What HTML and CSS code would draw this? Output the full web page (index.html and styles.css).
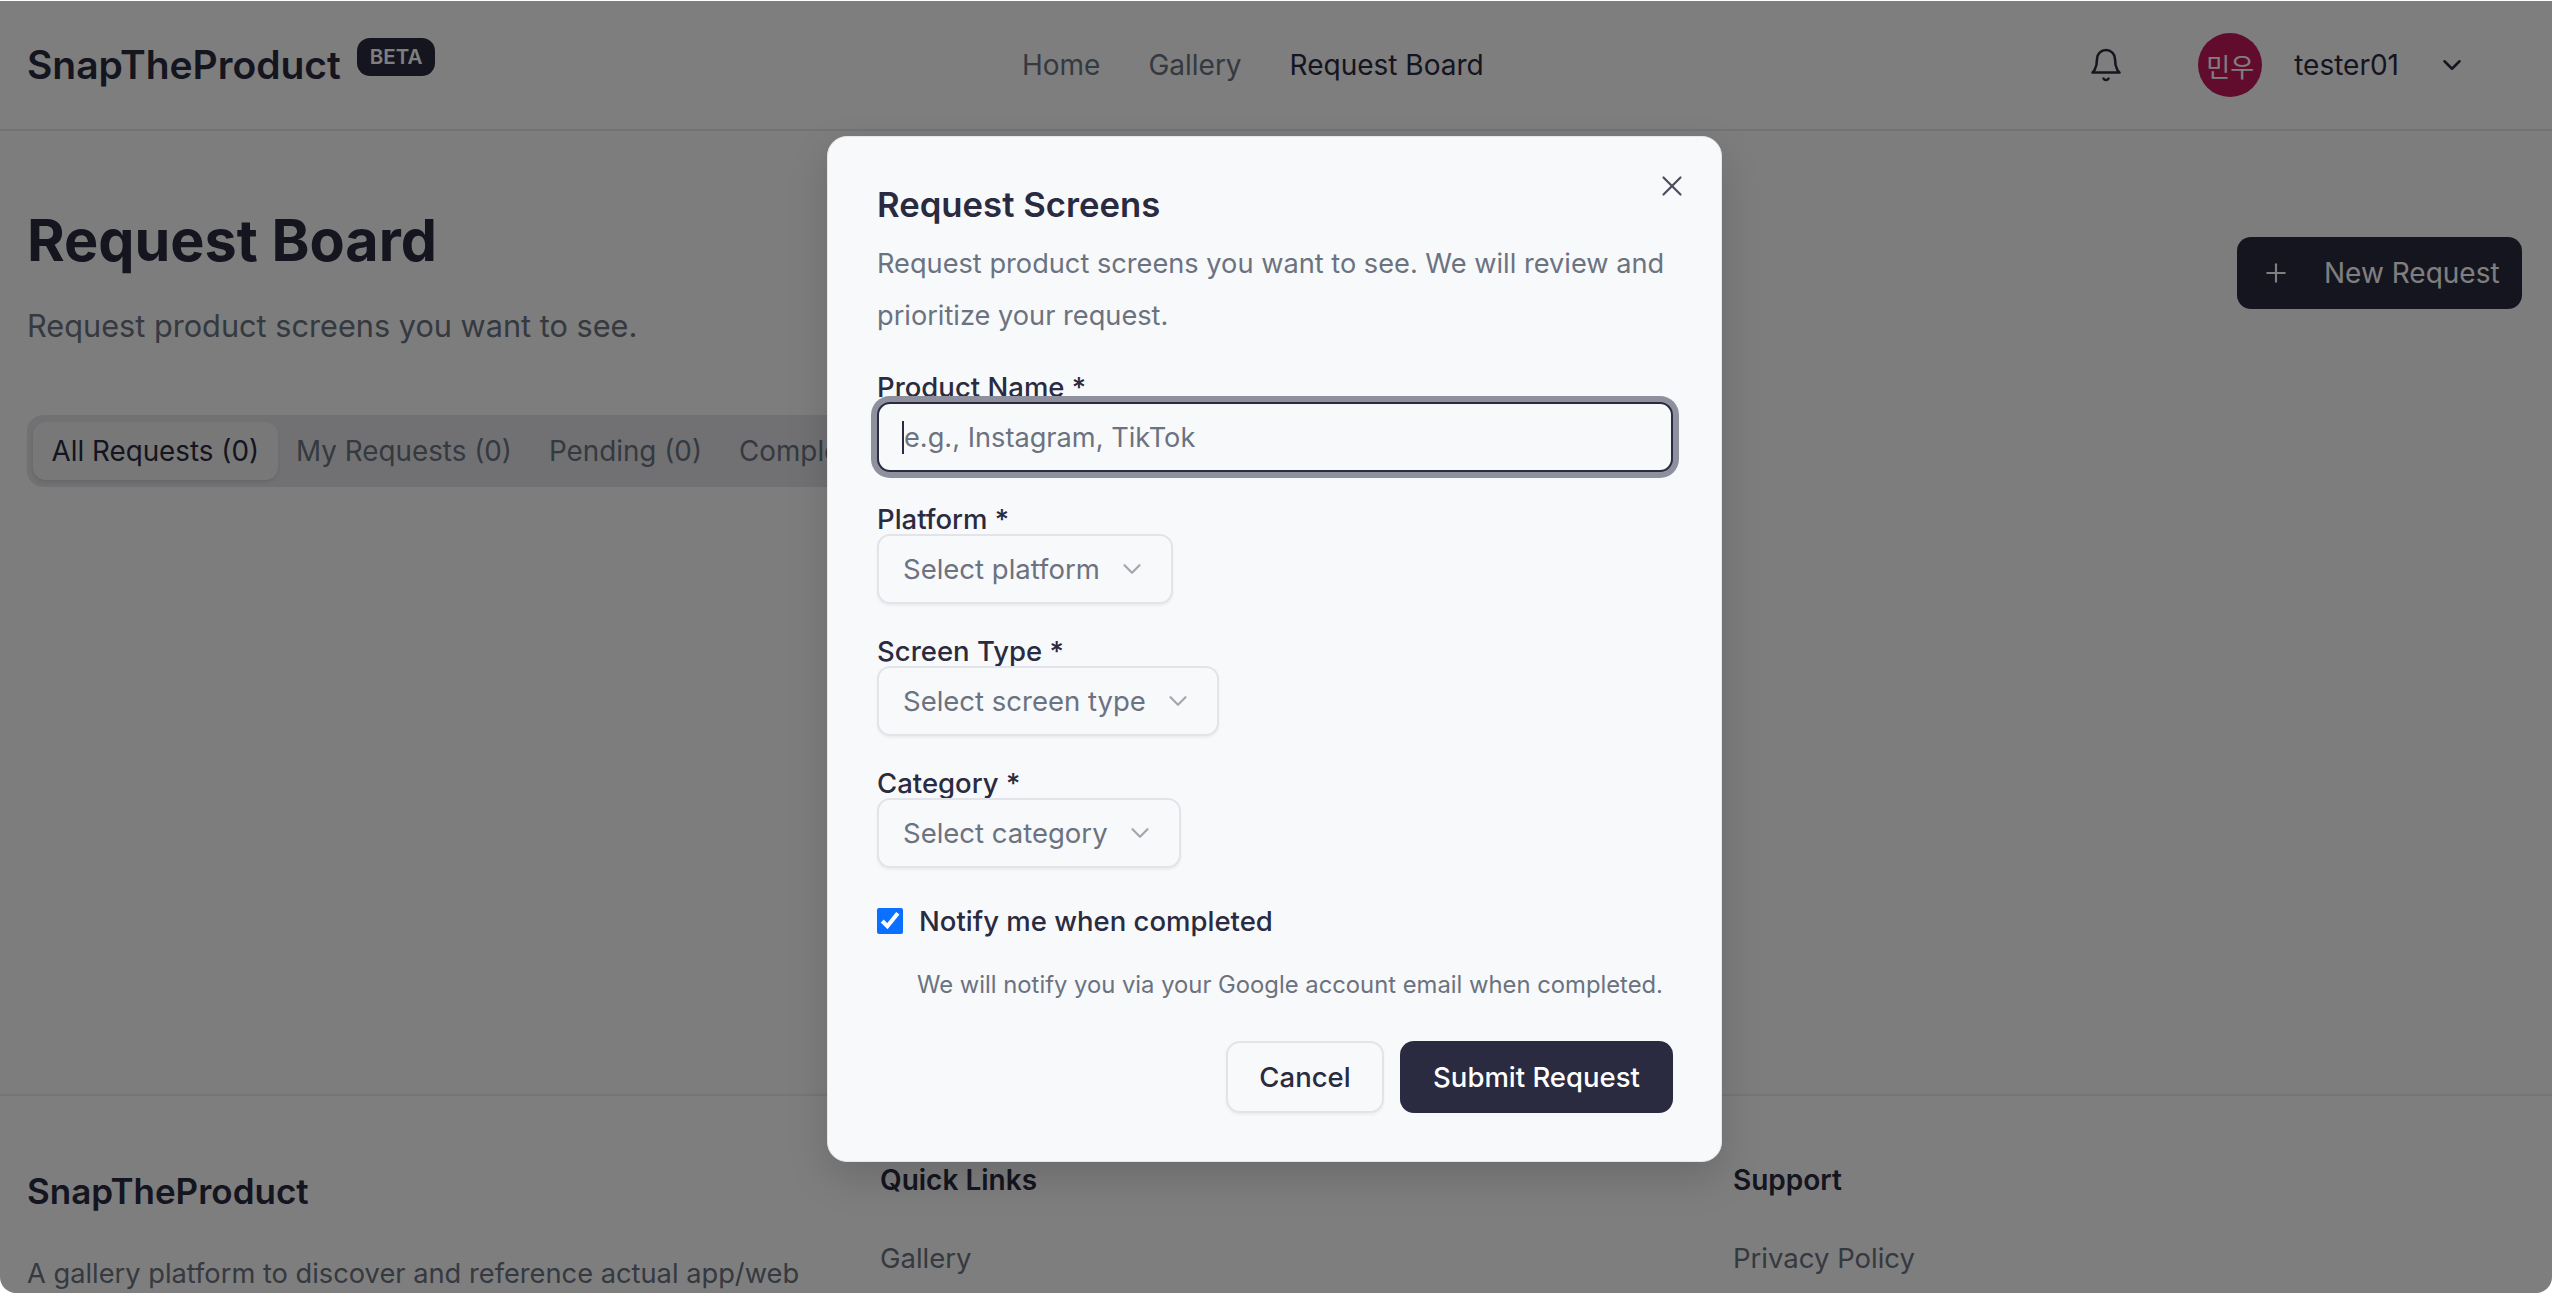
FILE: index.html
```html
<!DOCTYPE html>
<html lang="en">
<head>
  <meta charset="UTF-8">
  <meta name="viewport" content="width=device-width, initial-scale=1.0">
  <title>SnapTheProduct - Request Board</title>
  <link rel="stylesheet" href="styles.css">
</head>
<body>
  <div class="window">

    <!-- Header -->
    <header class="header">
      <div class="brand">
        <a class="logo">SnapTheProduct</a>
        <span class="beta">BETA</span>
      </div>
      <nav class="nav">
        <a>Home</a>
        <a>Gallery</a>
        <a class="active">Request Board</a>
      </nav>
      <div class="header-right">
        <button class="bell" aria-label="Notifications">
          <svg viewBox="0 0 24 24" class="icon-bell"><path d="M6 8a6 6 0 0 1 12 0c0 7 3 9 3 9H3s3-2 3-9"/><path d="M10.3 21a1.94 1.94 0 0 0 3.4 0"/></svg>
        </button>
        <div class="user">
          <span class="avatar">민우</span>
          <span class="username">tester01</span>
          <svg viewBox="0 0 24 24" class="icon-chevron"><path d="m6 9 6 6 6-6"/></svg>
        </div>
      </div>
    </header>

    <!-- Request board -->
    <main class="main">
      <div class="page-head">
        <div>
          <h1>Request Board</h1>
          <p class="subtitle">Request product screens you want to see.</p>
        </div>
        <button class="new-request">
          <svg viewBox="0 0 24 24" class="icon-plus"><path d="M5 12h14"/><path d="M12 5v14"/></svg>
          New Request
        </button>
      </div>
      <div class="tabs">
        <span class="tab active">All Requests (0)</span>
        <span class="tab">My Requests (0)</span>
        <span class="tab">Pending (0)</span>
        <span class="tab">Completed (0)</span>
      </div>
    </main>

    <!-- Footer -->
    <footer class="footer">
      <div>
        <h3 class="footer-logo">SnapTheProduct</h3>
        <p class="footer-text">A gallery platform to discover and reference actual app/web</p>
      </div>
      <div>
        <h4>Quick Links</h4>
        <a>Gallery</a>
      </div>
      <div>
        <h4>Support</h4>
        <a>Privacy Policy</a>
      </div>
    </footer>

    <!-- Modal -->
    <div class="overlay">
      <form class="modal">
        <button type="button" class="close" aria-label="Close">
          <svg viewBox="0 0 24 24"><path d="M18 6 6 18"/><path d="m6 6 12 12"/></svg>
        </button>
        <h2>Request Screens</h2>
        <p class="modal-desc">Request product screens you want to see. We will review and prioritize your request.</p>

        <label for="product">Product Name *</label>
        <div class="input-wrap">
          <input type="text" id="product" placeholder="e.g., Instagram, TikTok" autofocus>
        </div>

        <label>Platform *</label>
        <button type="button" class="select">Select platform
          <svg viewBox="0 0 24 24"><path d="m6 9 6 6 6-6"/></svg>
        </button>

        <label>Screen Type *</label>
        <button type="button" class="select">Select screen type
          <svg viewBox="0 0 24 24"><path d="m6 9 6 6 6-6"/></svg>
        </button>

        <label>Category *</label>
        <button type="button" class="select">Select category
          <svg viewBox="0 0 24 24"><path d="m6 9 6 6 6-6"/></svg>
        </button>

        <div class="notify">
          <input type="checkbox" id="notify" checked>
          <label for="notify">Notify me when completed</label>
        </div>
        <p class="hint">We will notify you via your Google account email when completed.</p>

        <div class="actions">
          <button type="button" class="btn-cancel">Cancel</button>
          <button type="submit" class="btn-submit">Submit Request</button>
        </div>
      </form>
    </div>
  </div>
</body>
</html>
```

FILE: styles.css
```css
* {
  box-sizing: border-box;
}

html, body {
  height: 100%;
}

body {
  margin: 0;
  background: #fff;
  font-family: Inter, "Noto Sans CJK KR", sans-serif;
  font-size: 28px;
  color: #2a2b40;
  overflow: hidden;
}

button {
  font-family: inherit;
  font-size: inherit;
  border: none;
  background: none;
  color: inherit;
  padding: 0;
}

svg {
  fill: none;
  stroke: currentColor;
  stroke-width: 2;
  stroke-linecap: round;
  stroke-linejoin: round;
}

.window {
  position: relative;
  height: 1292px;
  margin-top: 1px;
  background: #fcfcfc;
  border-radius: 0 0 16px 16px;
  overflow: hidden;
  display: flex;
  flex-direction: column;
}

/* Header */
.header {
  height: 130px;
  flex-shrink: 0;
  padding: 0 27px;
  display: flex;
  align-items: center;
  justify-content: space-between;
  border-bottom: 2px solid #e6e6e8;
}

.brand {
  display: flex;
  align-items: flex-start;
  gap: 16px;
}

.logo {
  font-size: 39px;
  font-weight: 600;
  line-height: 50px;
}

.beta {
  margin-top: -2px;
  height: 38px;
  line-height: 38px;
  padding: 0 13px;
  border-radius: 13px;
  background: #2a2b40;
  color: #fff;
  font-size: 20.5px;
  font-weight: 600;
}

.nav {
  display: flex;
  gap: 48px;
  color: #6b7280;
}

.nav .active {
  color: #2a2b40;
}

.header-right {
  display: flex;
  align-items: center;
  gap: 56px;
}

.bell {
  width: 72px;
  height: 72px;
  display: flex;
  align-items: center;
  justify-content: center;
}

.icon-bell {
  width: 36px;
  height: 36px;
  stroke-width: 1.7;
}

.user {
  display: flex;
  align-items: center;
  gap: 32px;
}

.avatar {
  width: 64px;
  height: 64px;
  border-radius: 50%;
  background: #c2185b;
  color: #fff;
  font-size: 26px;
  display: flex;
  align-items: center;
  justify-content: center;
}

.icon-chevron {
  width: 30px;
  height: 30px;
  margin-left: 6px;
  margin-right: 58px;
}

/* Request board */
.main {
  flex: 1;
  padding: 73px 27px 0;
  background: #fafbfa;
  overflow: hidden;
}

.page-head {
  display: flex;
  justify-content: space-between;
  align-items: center;
}

h1 {
  margin: 0;
  font-size: 57.5px;
  line-height: 72px;
  font-weight: 700;
}

.subtitle {
  margin: 28px 0 0;
  font-size: 30.7px;
  line-height: 44px;
  color: #6b7280;
}

.new-request {
  width: 285px;
  height: 72px;
  margin: 0 3px 7px 0;
  padding: 0 24px;
  border-radius: 14px;
  background: #2a2b40;
  color: #fff;
  display: flex;
  align-items: center;
  gap: 33px;
  white-space: nowrap;
}

.icon-plus {
  width: 30px;
  height: 30px;
  flex-shrink: 0;
  stroke-width: 1.7;
}

.tabs {
  display: inline-flex;
  align-items: center;
  height: 72px;
  margin-top: 67px;
  padding: 0 6px;
  border-radius: 16px;
  background: #e2e3e6;
  color: #6b7280;
  font-size: 27.8px;
}

.tab {
  height: 58px;
  line-height: 58px;
  padding: 0 18.5px;
  white-space: nowrap;
}

.tab.active {
  border-radius: 13px;
  background: #f0f1f3;
  color: #2a2b40;
  box-shadow: 0 2px 4px rgba(0, 0, 0, 0.1);
}

/* Footer */
.footer {
  height: 199px;
  flex-shrink: 0;
  padding: 70px 20px 0 27px;
  display: grid;
  grid-template-columns: repeat(3, 1fr);
  gap: 54px;
  border-top: 2px solid #ebebec;
  overflow: hidden;
}

.footer-logo {
  margin: 0;
  font-size: 35px;
  font-weight: 600;
  line-height: 50px;
}

.footer-text {
  margin: 37px 0 0;
  color: #6b7280;
  font-size: 27.25px;
  line-height: 42px;
  white-space: nowrap;
}

.footer h4 {
  margin: -2px 0 0;
  font-size: 28px;
  font-weight: 600;
  line-height: 32px;
}

.footer a {
  display: block;
  margin-top: 45px;
  color: #6b7280;
  font-size: 27.5px;
}

/* Modal */
.overlay {
  position: absolute;
  inset: 0;
  padding: 4px 3px 0 0;
  background: rgba(0, 0, 0, 0.5);
  display: flex;
  align-items: center;
  justify-content: center;
}

.modal {
  position: relative;
  width: 895px;
  height: 1026px;
  padding: 47px 48px 0 49px;
  border-radius: 20px;
  background: #f8f9fb;
  border: 1px solid #e5e6ea;
  box-shadow: 0 16px 40px rgba(0, 0, 0, 0.15);
  font-size: 27.5px;
}

.close {
  position: absolute;
  top: 32px;
  right: 32px;
  width: 34px;
  height: 34px;
  color: #4a4b5c;
}

.close svg {
  width: 34px;
  height: 34px;
  stroke-width: 1.5;
}

h2 {
  margin: 0;
  font-size: 34.7px;
  line-height: 40px;
  font-weight: 600;
}

.modal-desc {
  margin: 14px 0 0;
  font-size: 27.2px;
  line-height: 52px;
  color: #6b7280;
}

.modal > label {
  display: block;
  height: 26px;
  line-height: 22px;
  font-weight: 500;
  margin-top: 36px;
}

.modal > label[for="product"] {
  margin-top: 34px;
}

.input-wrap {
  position: relative;
}

/* text caret of the focused field */
.input-wrap::after {
  content: "";
  position: absolute;
  left: 25px;
  top: 19px;
  width: 2px;
  height: 33px;
  background: #2a2b40;
}

#product {
  display: block;
  width: 796px;
  height: 70px;
  padding: 0 25px;
  font-family: inherit;
  font-size: 27.2px;
  color: #2a2b40;
  background: #f8f9fb;
  border: 2px solid #2a2b40;
  border-radius: 13px;
  outline: none;
  box-shadow: 0 0 0 6px #8f909e;
}

#product::placeholder {
  color: #6b7280;
}

.select {
  display: inline-flex;
  align-items: center;
  gap: 17px;
  height: 70px;
  padding: 0 24px;
  color: #6b7280;
  background: #f8f9fb;
  border: 2px solid #e3e4ea;
  border-radius: 13px;
  box-shadow: 0 2px 3px rgba(0, 0, 0, 0.05);
  vertical-align: top;
}

.select svg {
  width: 30px;
  height: 30px;
  color: #a3a7ae;
  stroke-width: 1.8;
}

.notify {
  display: flex;
  align-items: center;
  gap: 16px;
  margin-top: 39px;
  height: 28px;
}

.notify input {
  width: 26px;
  height: 26px;
  margin: 0;
  accent-color: #0b6fff;
}

.notify label {
  font-weight: 500;
}

.hint {
  margin: 32px 0 0 40px;
  font-size: 23.8px;
  line-height: 36px;
  color: #6b7280;
}

.actions {
  display: flex;
  justify-content: flex-end;
  gap: 16px;
  margin-top: 38px;
}

.btn-cancel, .btn-submit {
  height: 72px;
  border-radius: 14px;
  font-weight: 500;
}

.btn-cancel {
  width: 158px;
  background: #f8f9fb;
  border: 2px solid #e3e4ea;
  box-shadow: 0 2px 3px rgba(0, 0, 0, 0.05);
}

.btn-submit {
  width: 273px;
  background: #2a2b40;
  color: #fff;
}
```
